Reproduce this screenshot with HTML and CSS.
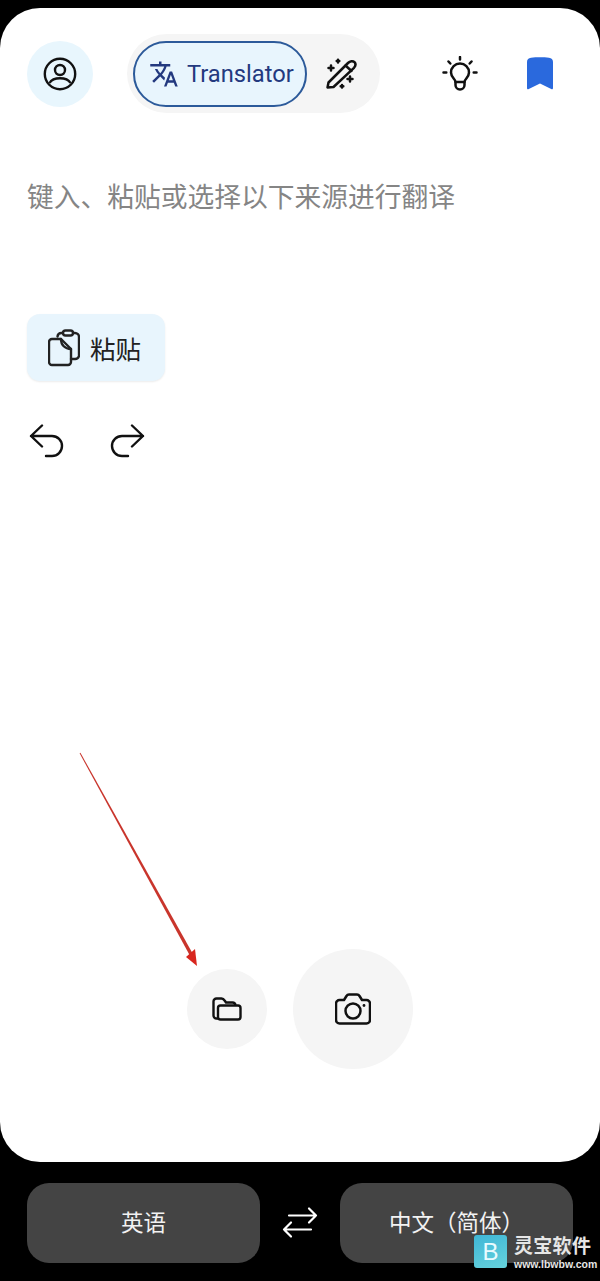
FILE: index.html
```html
<!DOCTYPE html>
<html lang="zh-CN">
  <head>
    <meta charset="UTF-8" />
    <meta name="viewport" content="width=device-width, initial-scale=1.0" />
    <title>Translator</title>
    <link rel="stylesheet" href="styles.css">
  </head>
  <body>
    <!-- White card with the input area -->
    <main class="card">
      <header class="top-bar">
        <div class="avatar">
          <svg width="34" height="34" viewBox="0 0 34 34" fill="none" stroke="#111" stroke-width="2.400">
            <circle cx="17" cy="17" r="15.2" />
            <circle cx="17" cy="13" r="5" />
            <path d="M6.500 26c2-3.400 6-4.800 10.500-4.800s8.500 1.400 10.500 4.800" />
          </svg>
        </div>

        <!-- Mode switch -->
        <div class="mode-pill">
          <div class="mode-active">
            <svg width="30" height="30" viewBox="0 0 24 24" fill="#23397f">
              <path d="M12.87 15.07l-2.54-2.51.03-.03c1.74-1.94 2.98-4.17 3.71-6.53H17V4h-7V2H8v2H1v1.99h11.17C11.5 7.92 10.44 9.75 9 11.35 8.07 10.32 7.3 9.19 6.69 8h-2c.73 1.63 1.73 3.17 2.98 4.56l-5.09 5.02L4 19l5-5 3.11 3.11.76-2.04zM18.5 10h-2L12 22h2l1.12-3h4.75L21 22h2l-4.5-12zm-2.62 7l1.62-4.33L19.12 17h-3.24z" />
            </svg>
            <span>Translator</span>
          </div>
          <svg class="wand" width="32" height="32" viewBox="0 0 32 32" fill="none" stroke="#111" stroke-width="2.500" stroke-linejoin="round" stroke-linecap="round">
            <path d="M2.500 29.500 L3.500 24.500 L23 5 C25 3 28 2.800 29.500 4.200 C31 5.800 30.500 8 29 9.800 L8.500 29 Z" />
            <path d="M20.500 7.500 L26.500 13" />
            <path d="M13 1.800v2.600M11.700 3.100h2.600M6 7.500v5M3.500 10h5M25 18.500v5M22.500 21h5M17 27v2.600M15.700 28.300h2.600" />
          </svg>
        </div>

        <div class="top-actions">
          <svg width="36" height="36" viewBox="0 0 36 36" fill="none" stroke="#111" stroke-width="2.500" stroke-linecap="round" stroke-linejoin="round">
            <path d="M18 1v2.500M6.500 5.500l1.800 2M29.500 5.500l-1.800 2M1.500 16.500h2.800M31.700 16.500h2.800" />
            <path d="M13.500 26c0-3-4.500-4.500-4.500-9.500a9 9 0 0 1 18 0c0 5-4.500 6.500-4.500 9.500z" />
            <path d="M13.500 26v3a4 4 0 0 0 9 0v-3" />
          </svg>
          <svg width="28" height="33" viewBox="0 0 28 33" fill="#2a69dd">
            <path d="M1 5c0-3 1.500-4 4-4.300 5.500-.6 12.500-.6 18 0 2.500.3 4 1.300 4 4.300v26c0 1.200-.8 1.500-1.800 1L14 26.500 2.800 32c-1 .5-1.800.2-1.800-1z" />
          </svg>
        </div>
      </header>

      <p class="prompt">键入、粘贴或选择以下来源进行翻译</p>

      <button class="paste-btn">
        <svg width="32" height="38" viewBox="0 0 32 38" fill="none" stroke="#222" stroke-width="2.400" stroke-linejoin="round" stroke-linecap="round">
          <path d="M15 4h-1.500a4 4 0 0 0-4 3.500M25 4h2a4 4 0 0 1 4 4v19a4 4 0 0 1-4 3h-4" />
          <rect x="15" y="1.500" width="10" height="5" rx="2.500" />
          <path d="M4 10h9l10 10v13a3 3 0 0 1-3 3H4a3 3 0 0 1-3-3V13a3 3 0 0 1 3-3z" />
          <path d="M13 10c0 6 4 10 10 10" />
        </svg>
        <span>粘贴</span>
      </button>

      <div class="history">
        <svg width="36" height="34" viewBox="0 0 36 34" fill="none" stroke="#111" stroke-width="2.400" stroke-linecap="round" stroke-linejoin="round">
          <path d="M13 1.500 2 12l11 10.500M2 12h21a9.800 9.800 0 0 1 0 20h-6" />
        </svg>
        <svg width="36" height="34" viewBox="0 0 36 34" fill="none" stroke="#111" stroke-width="2.400" stroke-linecap="round" stroke-linejoin="round">
          <path d="M23 1.500 34 12 23 22.500M34 12H13a9.800 9.800 0 0 0 0 20h6" />
        </svg>
      </div>

      <!-- Folder and camera sources -->
      <div class="sources">
        <div class="source source-small">
          <svg width="30" height="24" viewBox="0 0 30 24" fill="none" stroke="#111" stroke-width="2.400" stroke-linejoin="round">
            <path d="M6 21.500H4.500a3 3 0 0 1-3-3V4.500a3 3 0 0 1 3-3h5c1.500 0 2.500 1 3.500 2.500l1 1.500h6.500a3 3 0 0 1 3 2.500" />
            <rect x="6" y="8.500" width="22.500" height="14" rx="2.500" />
          </svg>
        </div>
        <div class="source source-big">
          <svg width="36" height="32" viewBox="0 0 36 32" fill="none" stroke="#111" stroke-width="2.500" stroke-linejoin="round">
            <path d="M4.500 7H9l2.500-4c.6-1 1.500-1.500 2.500-1.500h8c1 0 1.900.5 2.500 1.500L27 7h4.500a3.500 3.500 0 0 1 3.500 3.500V27a3.500 3.500 0 0 1-3.500 3.500h-27A3.500 3.500 0 0 1 1 27V10.500A3.500 3.500 0 0 1 4.500 7z" />
            <circle cx="18" cy="18" r="7.500" />
            <circle cx="29" cy="12.500" r="1.400" fill="#111" stroke="none" />
          </svg>
        </div>
      </div>

      <!-- Red annotation arrow drawn on the screenshot -->
      <svg class="annotation" width="130" height="225" viewBox="0 0 130 225">
        <path d="M.6 1.300 L1.400 .7 L114.500 203 L111.500 204.700 Z" fill="#c9352c" />
        <path d="M107 205 L118 214 L116 197 Z" fill="#d8261e" />
      </svg>
    </main>

    <!-- Language selector -->
    <nav class="lang-bar">
      <button class="lang-btn">英语</button>
      <svg class="swap" width="36" height="34" viewBox="0 0 36 34" fill="none" stroke="#fff" stroke-width="2.200" stroke-linecap="round" stroke-linejoin="round">
        <path d="M7 9.500h27M27 2.500l7 7-7 7M29 23.500H2M9 16.500l-7 7 7 7" />
      </svg>
      <button class="lang-btn">中文（简体）</button>
    </nav>

    <!-- Site watermark -->
    <div class="watermark">
      <div class="watermark-logo">B</div>
      <div class="watermark-text">
        <strong>灵宝软件</strong>
        <small>www.lbwbw.com</small>
      </div>
    </div>
  </body>
</html>
```

FILE: styles.css
```css
* {
  box-sizing: border-box;
}

body {
  position: relative;
  margin: 0;
  height: 1281px;
  padding-top: 8px;
  overflow: hidden;
  display: flex;
  flex-direction: column;
  background-color: #000;
  font-family: "Noto Sans CJK SC", "Noto Sans", sans-serif;
}

button {
  border: none;
  font-family: inherit;
}

.card {
  position: relative;
  height: 1154px;
  padding: 26px 27px 93px;
  display: flex;
  flex-direction: column;
  background-color: #fff;
  border-radius: 40px;
}

.top-bar {
  height: 79px;
  display: flex;
  align-items: center;
}

.avatar {
  width: 66px;
  height: 66px;
  display: flex;
  justify-content: center;
  align-items: center;
  background-color: #e8f6fd;
  border-radius: 50%;
}

.mode-pill {
  width: 253px;
  height: 79px;
  margin-left: 34px;
  padding-left: 6px;
  display: flex;
  align-items: center;
  background-color: #f5f5f5;
  border-radius: 40px;
}

.mode-active {
  width: 174px;
  height: 66px;
  padding-left: 14px;
  display: flex;
  align-items: center;
  gap: 8px;
  background-color: #e8f5fd;
  border: 2px solid #2c5a9a;
  border-radius: 33px;
  color: #23397f;
  font-family: Roboto, sans-serif;
  font-size: 23.7px;
}

.wand {
  margin-left: 18px;
}

.top-actions {
  margin-left: 62px;
  display: flex;
  align-items: center;
  gap: 48px;
}

.prompt {
  margin: 63px 0 0;
  font-size: 26.75px;
  line-height: 40px;
  color: #858585;
  white-space: nowrap;
}

.paste-btn {
  width: 138px;
  height: 67px;
  margin-top: 98px;
  padding: 0 0 0 21px;
  display: flex;
  align-items: center;
  gap: 10px;
  background-color: #e8f5fd;
  border-radius: 13px;
  box-shadow: 0 1px 2px rgba(0, 0, 0, 0.08);
  color: #222;
  font-size: 25.5px;
}

.history {
  margin-top: 43px;
  padding-left: 2px;
  display: flex;
  gap: 44px;
}

.sources {
  margin-top: auto;
  display: flex;
  justify-content: center;
  align-items: center;
  gap: 26px;
}

.source {
  display: flex;
  justify-content: center;
  align-items: center;
  background-color: #f5f5f5;
  border-radius: 50%;
}

.source-small {
  width: 80px;
  height: 80px;
}

.source-big {
  width: 120px;
  height: 120px;
}

.annotation {
  position: absolute;
  left: 79px;
  top: 744px;
}

.lang-bar {
  padding: 21px 27px 0;
  display: flex;
  justify-content: space-between;
  align-items: center;
}

.lang-btn {
  width: 233px;
  height: 80px;
  padding: 0 0 4px;
  background-color: #444;
  border-radius: 22px;
  color: #f2f2f2;
  font-size: 22.5px;
}

.swap {
  flex-shrink: 0;
}

.watermark {
  position: absolute;
  left: 474px;
  top: 1235px;
  display: flex;
  gap: 7px;
}

.watermark-logo {
  width: 33px;
  height: 33px;
  display: flex;
  justify-content: center;
  align-items: center;
  background-image: linear-gradient(160deg, #3fb6d6 0%, #66d2dc 100%);
  border-radius: 3px;
  color: #e9fbff;
  font-family: "Liberation Sans", sans-serif;
  font-size: 24px;
}

.watermark-text {
  padding-top: 2px;
  display: flex;
  flex-direction: column;
  color: #e6e6e6;
}

.watermark-text strong {
  font-family: "Liberation Sans", "Noto Sans CJK SC", sans-serif;
  font-size: 19px;
  line-height: 20px;
  letter-spacing: 0.3px;
}

.watermark-text small {
  margin-top: 2px;
  font-family: "Liberation Sans", sans-serif;
  font-size: 10.5px;
  font-weight: bold;
  line-height: 11px;
  white-space: nowrap;
}
```
